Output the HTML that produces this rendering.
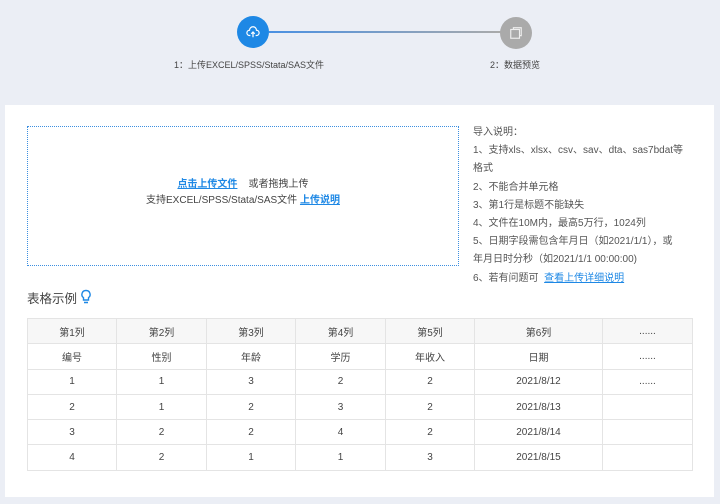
<!DOCTYPE html>
<html><head><meta charset="utf-8"><style>
*{margin:0;padding:0;box-sizing:border-box}
body{width:720px;height:504px;background:#ebeef5;font-family:"Liberation Sans","Noto Sans CJK SC",sans-serif;color:#555;position:relative;overflow:hidden}
.abs{position:absolute}
.c{width:32px;height:32px;border-radius:50%;display:flex;align-items:center;justify-content:center}
.lbl{font-size:9px;color:#444;white-space:nowrap}
.panel{left:5px;top:105px;width:709px;height:392px;background:#fff}
.drop{left:27px;top:126px;width:432px;height:140px;border:1px dotted #3d8fe0;text-align:center;font-size:10px;color:#444}
a{color:#1e88e5;text-decoration:underline;font-weight:bold}
.info{left:473px;top:124px;width:214px;font-size:10px;line-height:18.2px;color:#555}
table{position:absolute;left:27px;top:318px;border-collapse:collapse;font-size:10px;color:#444}
td{border:1px solid #e4e4e4;height:25.3px;text-align:center}
tr:first-child td{background:#f7f7f7}
</style></head><body>
<div class="abs" style="left:269px;top:31px;width:232px;height:2px;background:linear-gradient(90deg,#4a90e2,#aaa)"></div>
<div class="abs c" style="left:237px;top:16px;background:#1e88e5">
<svg width="14" height="14" viewBox="0 0 16 16" fill="none" stroke="#fff" stroke-width="1.4"><path d="M5 12H4a3 3 0 0 1 0-6 4 4 0 0 1 8 0 3 3 0 0 1 0 6h-1"/><path d="M8 14V8M6 10l2-2 2 2"/></svg></div>
<div class="abs c" style="left:500px;top:17px;background:#aaa">
<svg width="14" height="14" viewBox="0 0 16 16" fill="none" stroke="#eee" stroke-width="1.3"><rect x="2" y="4" width="10" height="10"/><path d="M5 4V2h9v9h-2"/></svg></div>
<div class="abs lbl" style="left:174px;top:58px">1：上传EXCEL/SPSS/Stata/SAS文件</div>
<div class="abs lbl" style="left:490px;top:58px">2：数据预览</div>
<div class="abs panel"></div>
<div class="abs drop"><div style="margin-top:50px;line-height:16px"><a>点击上传文件</a>&nbsp;&nbsp;&nbsp; 或者拖拽上传<br>支持EXCEL/SPSS/Stata/SAS文件 <a>上传说明</a></div></div>
<div class="abs info">导入说明：<br>1、支持xls、xlsx、csv、sav、dta、sas7bdat等<br>格式<br>2、不能合并单元格<br>3、第1行是标题不能缺失<br>4、文件在10M内，最高5万行，1024列<br>5、日期字段需包含年月日（如2021/1/1），或<br>年月日时分秒（如2021/1/1 00:00:00)<br>6、若有问题可&nbsp; <a style="font-weight:normal">查看上传详细说明</a></div>
<div class="abs" style="left:27px;top:288px;font-size:12.5px;color:#444">表格示例</div>
<svg class="abs" style="left:80px;top:289px" width="12" height="16" viewBox="0 0 12 16" fill="none" stroke="#1e88e5" stroke-width="1.4"><path d="M6 1.5a4 4 0 0 0-2.5 7.2V11h5V8.7A4 4 0 0 0 6 1.5zM4 13.5h4"/></svg>
<table>
<colgroup><col style="width:89px"><col style="width:90px"><col style="width:89px"><col style="width:90px"><col style="width:89px"><col style="width:128px"><col style="width:90px"></colgroup>
<tr><td>第1列</td><td>第2列</td><td>第3列</td><td>第4列</td><td>第5列</td><td>第6列</td><td>......</td></tr>
<tr><td>编号</td><td>性别</td><td>年龄</td><td>学历</td><td>年收入</td><td>日期</td><td>......</td></tr>
<tr><td>1</td><td>1</td><td>3</td><td>2</td><td>2</td><td>2021/8/12</td><td>......</td></tr>
<tr><td>2</td><td>1</td><td>2</td><td>3</td><td>2</td><td>2021/8/13</td><td></td></tr>
<tr><td>3</td><td>2</td><td>2</td><td>4</td><td>2</td><td>2021/8/14</td><td></td></tr>
<tr><td>4</td><td>2</td><td>1</td><td>1</td><td>3</td><td>2021/8/15</td><td></td></tr>
</table>
</body></html>
